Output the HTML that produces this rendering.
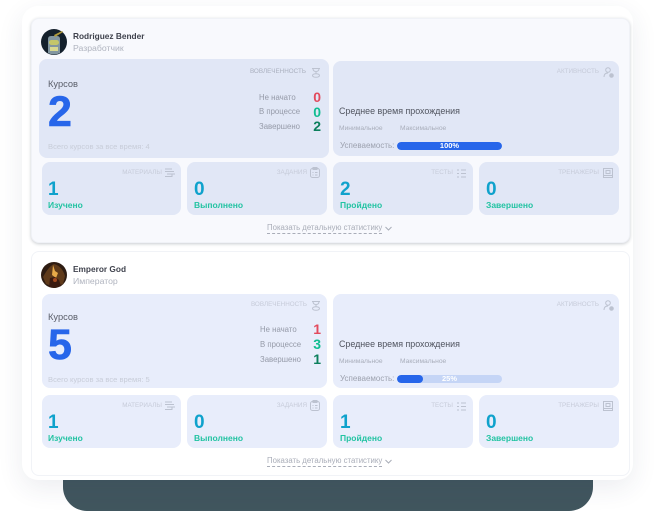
<!DOCTYPE html>
<html lang="ru"><head><meta charset="utf-8"><style>
*{box-sizing:border-box}
html,body{margin:0;padding:0;background:#fff}
body{width:654px;height:511px;position:relative;overflow:hidden;font-family:"Liberation Sans",sans-serif;color:#40444f}
div,span,svg{position:absolute}
.t{white-space:nowrap;line-height:1;filter:blur(.2px)}
.dark{left:63px;top:470px;width:530px;height:41px;background:#41565e;border-radius:0 0 24px 24px}
.outer{left:22px;top:6px;width:611px;height:474px;background:#fff;border-radius:16px;box-shadow:0 8px 26px rgba(40,60,90,.09)}
.card{left:31px;width:599px;height:225px;border-radius:8px}
.c1{top:18px;background:#f8f9fd;border:1px solid #f0f2f7;box-shadow:0 1px 3px rgba(30,40,60,.24)}
.c2{top:251px;background:#fff;border:1px solid #f1f3f7}
.p{border-radius:8px;background:#e1e7f6}
.b .p{background:#e8edfb}
.name{font-size:8.3px;font-weight:bold;color:#3f424d;left:73px}
.role{font-size:8.7px;color:#b0b4bf;left:73px}
.lab{font-size:6.3px;color:#c6cbd9;text-align:right}
.kurs{font-size:9.3px;left:48px;color:#5a5e69}
.big{font-size:43px;font-weight:bold;color:#2766ea;left:48px;-webkit-text-stroke:.6px #2766ea}
.st{font-size:7.8px;color:#959aa8}
.v{font-size:14px;font-weight:bold;text-align:right}
.all{font-size:7.6px;color:#c8cdd9;left:48px}
.sr{font-size:8.9px;color:#50545f;left:339px}
.mm{font-size:6.7px;color:#a9aebb}
.usp{font-size:8px;color:#9da2af;left:340px}
.bar{left:397px;width:105px;height:8px;border-radius:4px;background:#c5d5f6;overflow:hidden}
.fill{left:0;top:0;height:8px;background:#2766ea;border-radius:4px}
.pct{left:397px;width:105px;text-align:center;font-size:7.5px;font-weight:bold;color:#fff}
.num{font-size:19px;font-weight:bold;color:#0fa2cc}
.res{font-size:8.5px;font-weight:bold;color:#22c3a2}
.show{left:267px;font-size:7.8px;color:#a9adb8;border-bottom:1px dashed #a9adb8;padding-bottom:1px;height:10px}
svg{fill:none;stroke:#bcc2d0;stroke-width:1}
</style></head><body>
<div class="dark"></div>
<div class="outer"></div>

<div class="card c1"></div>
<svg style="left:41px;top:29px;stroke:none" width="26" height="26" viewBox="0 0 26 26"><circle cx="13" cy="13" r="13" fill="#14202c"/><path d="M7 24V10q0-3 3-3h6q3 0 3 3v14q-6 3-12 0z" fill="#8296a0"/><rect x="8" y="11" width="10" height="5" rx="2.500" fill="#c4c66a"/><rect x="9" y="18" width="8" height="4" fill="#d8d890"/><path d="M13 6L21 2l1 1-8 5z" fill="#b09a3a"/></svg>
<div class="t name" style="top:32px">Rodriguez Bender</div>
<div class="t role" style="top:44px">Разработчик</div>

<div class="p" style="left:39px;top:59px;width:290px;height:99px"></div>
<div class="t lab" style="left:230px;top:69px;width:76px;color:#aab0bf">ВОВЛЕЧЕННОСТЬ</div>
<svg style="left:311px;top:67px" width="10" height="11" viewBox="0 0 10 11"><path d="M1 1.500h8M2 1.500q0 3 3 3t3-3M5 4.500v2"/><ellipse cx="5" cy="8.500" rx="3.500" ry="1.800"/></svg>
<div class="t kurs" style="top:80px">Курсов</div>
<div class="t big" style="top:91px">2</div>
<div class="t st" style="left:259px;top:94px">Не начато</div>
<div class="t st" style="left:259px;top:108px">В процессе</div>
<div class="t st" style="left:259px;top:123px">Завершено</div>
<div class="t v" style="left:290px;top:90px;width:31px;color:#e24a5d">0</div>
<div class="t v" style="left:290px;top:105px;width:31px;color:#10bd91">0</div>
<div class="t v" style="left:290px;top:119px;width:31px;color:#0b7f5c">2</div>
<div class="t all" style="top:143px">Всего курсов за все время: 4</div>

<div class="p" style="left:333px;top:61px;width:286px;height:95px"></div>
<div class="t lab" style="left:540px;top:69px;width:59px">АКТИВНОСТЬ</div>
<svg style="left:603px;top:67px" width="11" height="11" viewBox="0 0 11 11"><circle cx="5" cy="3" r="2.300"/><path d="M1 10q0-4 4-4"/><circle cx="8.500" cy="8.500" r="1.800" fill="#bcc2d0"/></svg>
<div class="t sr" style="top:107px">Среднее время прохождения</div>
<div class="t mm" style="left:339px;top:126px">Минимальное</div>
<div class="t mm" style="left:400px;top:126px">Максимальное</div>
<div class="t usp" style="top:142px">Успеваемость:</div>
<div class="bar" style="top:142px"><div class="fill" style="width:105px"></div></div>
<div class="t pct" style="top:142px">100%</div>

<div class="p" style="left:42px;top:162px;width:139px;height:53px"></div>
<div class="p" style="left:187px;top:162px;width:140px;height:53px"></div>
<div class="p" style="left:333px;top:162px;width:140px;height:53px"></div>
<div class="p" style="left:479px;top:162px;width:140px;height:53px"></div>
<div class="t lab" style="left:110px;top:170px;width:52px">МАТЕРИАЛЫ</div>
<div class="t lab" style="left:260px;top:170px;width:47px">ЗАДАНИЯ</div>
<div class="t lab" style="left:410px;top:170px;width:43px">ТЕСТЫ</div>
<div class="t lab" style="left:540px;top:170px;width:59px">ТРЕНАЖЕРЫ</div>
<svg style="left:165px;top:168px" width="10" height="10" viewBox="0 0 10 10"><path d="M0 1h7M0 3.500h9M2 6h8M0 8.500h7M7 6v3"/></svg>
<svg style="left:310px;top:167px" width="10" height="11" viewBox="0 0 10 11"><rect x=".5" y="1.500" width="9" height="9" rx="2"/><path d="M3 .5h4v2H3zM2.500 5.500h1M5 5.500h2.500M2.500 8h1M5 8h2.500"/></svg>
<svg style="left:457px;top:169px" width="9" height="9" viewBox="0 0 9 9"><path d="M0 1h2M4 1h5M0 4.500h2M4 4.500h5M0 8h2M4 8h5"/></svg>
<svg style="left:603px;top:168px" width="10" height="10" viewBox="0 0 10 10"><path d="M.5.500h9v9h-9zM.5 7.500h9"/><rect x="3" y="2.500" width="4" height="3"/></svg>
<div class="t num" style="left:48px;top:180px">1</div>
<div class="t num" style="left:194px;top:180px">0</div>
<div class="t num" style="left:340px;top:180px">2</div>
<div class="t num" style="left:486px;top:180px">0</div>
<div class="t res" style="left:48px;top:201px">Изучено</div>
<div class="t res" style="left:194px;top:201px">Выполнено</div>
<div class="t res" style="left:340px;top:201px">Пройдено</div>
<div class="t res" style="left:486px;top:201px">Завершено</div>
<div class="t show" style="top:224px">Показать детальную статистику</div>
<svg style="left:385px;top:226px" width="7" height="5" viewBox="0 0 7 5"><path d="M.5 1l3 3 3-3" stroke="#a9adb8"/></svg>

<div class="card c2"></div>
<svg style="left:41px;top:262px;stroke:none" width="26" height="26" viewBox="0 0 26 26"><circle cx="13" cy="13" r="13" fill="#2e1c12"/><path d="M2 15Q8 4 13 2q8 2 11 12l-2 8-8 3-9-3z" fill="#5f3a1a"/><path d="M12 3l2 6 3 2-2 5-4-3z" fill="#e8aa48"/><path d="M8 25l1-9 5-1 4 3 2 6-6 2z" fill="#3a1a10"/><circle cx="14" cy="18" r="2" fill="#a0481e"/></svg>
<div class="t name" style="top:265px">Emperor God</div>
<div class="t role" style="top:277px">Император</div>

<div class="b">
<div class="p" style="left:42px;top:294px;width:285px;height:94px"></div>
<div class="t lab" style="left:232px;top:302px;width:75px">ВОВЛЕЧЕННОСТЬ</div>
<svg style="left:311px;top:300px" width="10" height="11" viewBox="0 0 10 11"><path d="M1 1.500h8M2 1.500q0 3 3 3t3-3M5 4.500v2"/><ellipse cx="5" cy="8.500" rx="3.500" ry="1.800"/></svg>
<div class="t kurs" style="top:313px">Курсов</div>
<div class="t big" style="top:324px">5</div>
<div class="t st" style="left:260px;top:326px">Не начато</div>
<div class="t st" style="left:260px;top:341px">В процессе</div>
<div class="t st" style="left:260px;top:356px">Завершено</div>
<div class="t v" style="left:290px;top:322px;width:31px;color:#e24a5d">1</div>
<div class="t v" style="left:290px;top:337px;width:31px;color:#10bd91">3</div>
<div class="t v" style="left:290px;top:352px;width:31px;color:#0b7f5c">1</div>
<div class="t all" style="top:376px">Всего курсов за все время: 5</div>

<div class="p" style="left:333px;top:294px;width:286px;height:94px"></div>
<div class="t lab" style="left:540px;top:302px;width:59px">АКТИВНОСТЬ</div>
<svg style="left:603px;top:300px" width="11" height="11" viewBox="0 0 11 11"><circle cx="5" cy="3" r="2.300"/><path d="M1 10q0-4 4-4"/><circle cx="8.500" cy="8.500" r="1.800" fill="#bcc2d0"/></svg>
<div class="t sr" style="top:340px">Среднее время прохождения</div>
<div class="t mm" style="left:339px;top:359px">Минимальное</div>
<div class="t mm" style="left:400px;top:359px">Максимальное</div>
<div class="t usp" style="top:375px">Успеваемость:</div>
<div class="bar" style="top:375px"><div class="fill" style="width:26px"></div></div>
<div class="t pct" style="top:375px">25%</div>

<div class="p" style="left:42px;top:395px;width:139px;height:53px"></div>
<div class="p" style="left:187px;top:395px;width:140px;height:53px"></div>
<div class="p" style="left:333px;top:395px;width:140px;height:53px"></div>
<div class="p" style="left:479px;top:395px;width:140px;height:53px"></div>
</div>
<div class="t lab" style="left:110px;top:403px;width:52px">МАТЕРИАЛЫ</div>
<div class="t lab" style="left:260px;top:403px;width:47px">ЗАДАНИЯ</div>
<div class="t lab" style="left:410px;top:403px;width:43px">ТЕСТЫ</div>
<div class="t lab" style="left:540px;top:403px;width:59px">ТРЕНАЖЕРЫ</div>
<svg style="left:165px;top:401px" width="10" height="10" viewBox="0 0 10 10"><path d="M0 1h7M0 3.500h9M2 6h8M0 8.500h7M7 6v3"/></svg>
<svg style="left:310px;top:400px" width="10" height="11" viewBox="0 0 10 11"><rect x=".5" y="1.500" width="9" height="9" rx="2"/><path d="M3 .5h4v2H3zM2.500 5.500h1M5 5.500h2.500M2.500 8h1M5 8h2.500"/></svg>
<svg style="left:457px;top:402px" width="9" height="9" viewBox="0 0 9 9"><path d="M0 1h2M4 1h5M0 4.500h2M4 4.500h5M0 8h2M4 8h5"/></svg>
<svg style="left:603px;top:401px" width="10" height="10" viewBox="0 0 10 10"><path d="M.5.500h9v9h-9zM.5 7.500h9"/><rect x="3" y="2.500" width="4" height="3"/></svg>
<div class="t num" style="left:48px;top:413px">1</div>
<div class="t num" style="left:194px;top:413px">0</div>
<div class="t num" style="left:340px;top:413px">1</div>
<div class="t num" style="left:486px;top:413px">0</div>
<div class="t res" style="left:48px;top:434px">Изучено</div>
<div class="t res" style="left:194px;top:434px">Выполнено</div>
<div class="t res" style="left:340px;top:434px">Пройдено</div>
<div class="t res" style="left:486px;top:434px">Завершено</div>
<div class="t show" style="top:457px">Показать детальную статистику</div>
<svg style="left:385px;top:459px" width="7" height="5" viewBox="0 0 7 5"><path d="M.5 1l3 3 3-3" stroke="#a9adb8"/></svg>
</body></html>
